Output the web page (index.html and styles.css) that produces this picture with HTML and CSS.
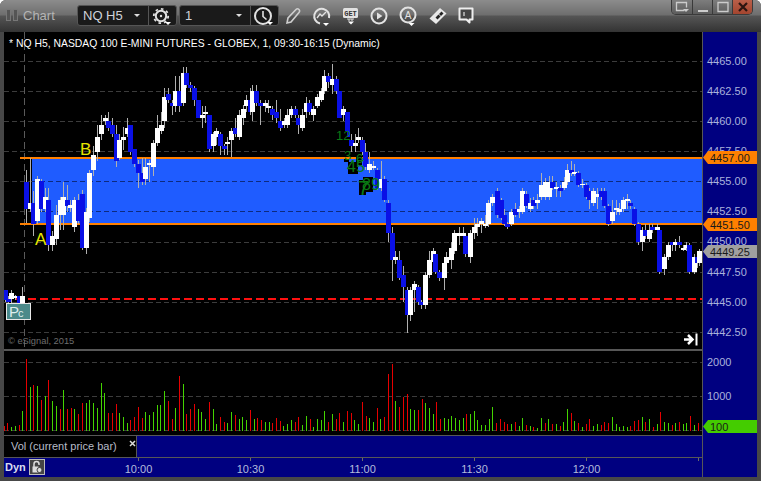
FILE: index.html
```html
<!DOCTYPE html>
<html lang="en">
<head>
<meta charset="utf-8">
<title>Chart</title>
<link rel="stylesheet" href="styles.css">
</head>
<body>
<div class="window">
  <header class="titlebar">
    <div class="grip"><span></span><span></span></div>
    <div class="app-name">Chart</div>
    <div class="combo">
      <div class="combo-field"><span>NQ H5</span><i class="caret"></i></div>
      <button class="combo-btn">
        <svg width="26" height="20" viewBox="0 0 26 20"><circle cx="12" cy="10" r="7.2" fill="none" stroke="#e2e2e2" stroke-width="1.8" stroke-dasharray="2.6 3"/><circle cx="12" cy="10" r="5.2" fill="none" stroke="#e2e2e2" stroke-width="2"/><circle cx="12" cy="10" r="1.2" fill="#e2e2e2"/><path d="M16 16h6l-3 3z" fill="#fff"/></svg>
      </button>
    </div>
    <div class="combo">
      <div class="combo-field"><span>1</span><i class="caret"></i></div>
      <button class="combo-btn">
        <svg width="26" height="20" viewBox="0 0 26 20"><circle cx="12" cy="10" r="8" fill="none" stroke="#e2e2e2" stroke-width="2"/><path d="M12 5v5.500l3.500 3" fill="none" stroke="#e2e2e2" stroke-width="1.600"/><path d="M16 16h6l-3 3z" fill="#fff"/></svg>
      </button>
    </div>
    <div class="tools">
      <svg class="tool" width="18" height="20" viewBox="0 0 18 20"><path d="M3 17l1-5L12 3.500a2 2 0 0 1 3 3L7 16z" fill="none" stroke="#cfcfcf" stroke-width="1.600"/></svg>
      <svg class="tool" width="22" height="22" viewBox="0 0 22 22"><path d="M9 18.500A7.500 7.500 0 1 1 18 13" fill="none" stroke="#e2e2e2" stroke-width="2"/><path d="M6 13l3-4 2 2 4-4" fill="none" stroke="#e2e2e2" stroke-width="1.400"/><path d="M12 18h6l-3 3z" fill="#fff"/></svg>
      <svg class="tool" width="20" height="20" viewBox="0 0 20 20"><rect x="2" y="2" width="15" height="10" rx="1.500" fill="#e2e2e2"/><text x="9.500" y="10" class="get">GET</text><path d="M6 13h7M8 13v2M11 13v2" stroke="#e2e2e2"/><path d="M7 15.500h6l-3 3z" fill="#fff"/></svg>
      <svg class="tool" width="20" height="20" viewBox="0 0 20 20"><circle cx="10" cy="10" r="7.500" fill="none" stroke="#e2e2e2" stroke-width="2"/><path d="M8 6.500l5.500 3.500-5.500 3.500z" fill="#e2e2e2"/></svg>
      <svg class="tool" width="22" height="22" viewBox="0 0 22 22"><circle cx="10" cy="10" r="7.500" fill="none" stroke="#e2e2e2" stroke-width="2"/><text x="10" y="14" class="circ-a">A</text><path d="M10.500 18h6l-3 3z" fill="#fff"/></svg>
      <svg class="tool" width="20" height="20" viewBox="0 0 20 20"><path d="M1.500 12.500L12 2l6.500 5.500L8 18z" fill="#e8e8e8"/><path d="M7.500 11.500l3-3 2 2-3 3zM11 8l2.500-2.500 2 2L13 10z" fill="#222"/></svg>
      <svg class="tool" width="18" height="20" viewBox="0 0 18 20"><path d="M2.500 2.500h13v11h-3v3l-3-3h-7z" fill="#444" stroke="#eee" stroke-width="2" stroke-linejoin="round"/><path d="M7 6v4" stroke="#fff"/></svg>
    </div>
    <div class="win-btns">
      <div class="win-btn"><svg width="14" height="12" viewBox="0 0 14 12"><path d="M9.500 9.500H1.500V1.500H11.500V6.500" fill="none" stroke="#ccc" stroke-width="1.300"/><path d="M8 8h6l-3 3z" fill="#ccc"/></svg></div>
      <div class="win-btn"><svg width="12" height="12" viewBox="0 0 12 12"><path d="M1 10h10" stroke="#ccc" stroke-width="2"/></svg></div>
      <div class="win-btn"><svg width="12" height="12" viewBox="0 0 12 12"><path d="M1 1.500h10v9H1z" fill="none" stroke="#ccc" stroke-width="1.300"/></svg></div>
      <div class="win-btn close"><svg width="12" height="12" viewBox="0 0 12 12"><path d="M2 2l8 8M10 2l-8 8" stroke="#2a1410" stroke-width="2.200"/></svg></div>
    </div>
  </header>

  <main class="workspace">
    <section class="plots">
      <svg id="price" class="price-plot" width="698" height="317" viewBox="4 32 698 317">
        <rect x="32" y="158" width="670" height="66" class="zone"/>
        <g class="grid">
          <path d="M4 61.500H702M4 91.500H702M4 121.500H702M4 151.500H702M4 242.500H702M4 272.500H702M4 302.500H702M4 332.500H702"/>
        </g>
        <path class="grid-zone" d="M32 181.500H702M32 211.500H702"/>
        <path class="grid-left" d="M4 181.500H32M4 211.500H32"/>
        <path class="session" d="M24.500 32V349"/>
        <path class="level" d="M20 158H702M20 224H702"/>
        <path class="prev-close" d="M4 299H702"/>
        <g id="candles"></g>
        <g class="counts">
          <rect x="339" y="131" width="8" height="10"/><rect x="344" y="159" width="5" height="3"/><rect x="356" y="153" width="6" height="12"/><rect x="348" y="162" width="10" height="12"/><rect x="359" y="180" width="7" height="15"/><rect x="363" y="177" width="10" height="15"/>
          <text x="336" y="140">12</text><text x="344" y="160">3</text><text x="356" y="163">6</text><text x="347" y="172" class="mid">45</text><text x="358" y="195" class="big">7</text><text x="362" y="190" class="mid">89</text>
        </g>
        <text x="80" y="155" class="mark">B</text>
        <text x="35" y="245" class="mark">A</text>
        <g>
          <rect x="6.500" y="303.500" width="24" height="16" class="pc-box"/>
          <text x="9" y="317" class="pc-text">P</text><text x="18" y="317" class="pc-text small">c</text>
        </g>
        <text x="8" y="344" class="copy">© eSignal, 2015</text>
        <path d="M684 339.500h7M688 335l4.500 4.500-4.500 4.500" fill="none" stroke="#fff" stroke-width="2.500"/>
        <path d="M696.500 333.500v12" stroke="#fff" stroke-width="2"/>
      </svg>
      <div class="pane-rule"></div>
      <svg id="volume" class="vol-plot" width="698" height="84" viewBox="4 351 698 84">
        <path class="grid" d="M4 362.500H702M4 396.500H702M4 430.500H702"/>
        <g id="vol-bars"></g>
      </svg>
      <div class="legend-row">
        <div class="legend"><span class="legend-name">Vol (current price bar)</span><svg class="legend-x" width="7" height="7" viewBox="0 0 7 7"><path d="M1 1l5 5M6 1l-5 5" stroke="#ddd" stroke-width="1.500"/></svg></div>
        <div class="legend-fill"></div>
      </div>
      <div class="time-row">
        <div class="dyn">Dyn</div>
        <div class="lock"><svg width="14" height="14" viewBox="1 1 14 14"><path d="M5 8V5a2.500 2.500 0 0 1 5 0v1" fill="none" stroke="#ddd" stroke-width="1.500"/><rect x="3.500" y="7.500" width="6" height="6" fill="#ddd"/><circle cx="10.500" cy="11" r="2.500" fill="#ddd" stroke="#444"/></svg></div>
        <svg class="time-axis" width="698" height="20" viewBox="4 457 698 20">
          <path class="tick" d="M138.500 458v3M250.500 458v3M362.500 458v3M474.500 458v3M586.500 458v3M698.500 458v3"/>
          <text x="138.500" y="473">10:00</text><text x="250.500" y="473">10:30</text><text x="362.500" y="473">11:00</text><text x="474.500" y="473">11:30</text><text x="586.500" y="473">12:00</text>
        </svg>
      </div>
    </section>
    <aside class="axis">
      <svg width="55" height="445" viewBox="702 32 55 445">
        <g class="axis-labels">
          <text x="707" y="65">4465.00</text><text x="707" y="95">4462.50</text><text x="707" y="125">4460.00</text><text x="707" y="155">4457.50</text><text x="707" y="185">4455.00</text><text x="707" y="215">4452.50</text><text x="707" y="245">4450.00</text><text x="707" y="276">4447.50</text><text x="707" y="306">4445.00</text><text x="707" y="336">4442.50</text>
          <text x="707" y="366">2000</text><text x="707" y="400">1000</text><text x="707" y="433">0</text>
        </g>
        <g class="flags">
          <path d="M703 157.500l5-6.500h49v13h-49z" fill="#ff8000"/><text x="710" y="161.500">4457.00</text>
          <path d="M703 224.500l5-6.500h49v13h-49z" fill="#ff8000"/><text x="710" y="228.500">4451.50</text>
          <path d="M703 251.500l5-6.500h49v13h-49z" fill="#a0a0a0"/><text x="710" y="255.500">4449.25</text>
          <path d="M703 426.500l5-6.500h49v13h-49z" fill="#44cc00"/><text x="710" y="430.500">100</text>
        </g>
      </svg>
    </aside>
    <div class="heading">* NQ H5, NASDAQ 100 E-MINI FUTURES - GLOBEX, 1, 09:30-16:15 (Dynamic)</div>
  </main>
</div>
<script src="chart.js"></script>
</body>
</html>
```

FILE: styles.css
```css
* { box-sizing: border-box; }
html, body { margin: 0; padding: 0; width: 761px; height: 481px; overflow: hidden; background: #fff; }
body { font-family: "Liberation Sans", Arial, sans-serif; }
svg { display: block; }

.window {
  width: 761px; height: 481px; display: flex; flex-direction: column;
  background: #474747; border-radius: 6px 6px 0 0; overflow: hidden;
}

.titlebar {
  height: 32px; flex: none; display: flex; align-items: flex-start; padding-left: 6px;
  background: linear-gradient(#8c8c8c 0, #6e6e6e 15px, #555 16px, #333 32px);
}
.grip { display: flex; gap: 2px; margin-top: 9px; }
.grip span { width: 5px; height: 12px; border: 1px solid #777; background: #555; }
.app-name { margin: 8px 0 0 5px; width: 54px; color: #b4b4b4; font-size: 13px; line-height: 16px; font-weight: 400; }

.combo {
  width: 100px; height: 21px; margin: 5px 2px 0 0; display: flex;
  background: #1a1a1a; border: 1px solid #555; border-radius: 3px; color: #cfd3da;
}
.combo-field { flex: 1; display: flex; align-items: center; justify-content: space-between; padding: 0 8px 0 5px; font-size: 13px; border-right: 1px solid #555; }
.caret { width: 0; height: 0; border: 3px solid transparent; border-top: 3px solid #ddd; border-bottom: 0; }
.combo-btn { width: 27px; flex: none; padding: 0; border: 0; background: none; }

.tools { display: flex; align-items: center; margin: 5px 0 0 0; height: 22px; }
.tool { flex: none; }
.tool:nth-child(1) { margin-left: 3px; }
.tool:nth-child(2) { margin-left: 9px; }
.tool:nth-child(3) { margin-left: 8px; }
.tool:nth-child(4) { margin-left: 8px; }
.tool:nth-child(5) { margin-left: 9px; }
.tool:nth-child(6) { margin-left: 8px; }
.tool:nth-child(7) { margin-left: 9px; }
.get { font: 700 7px "Liberation Mono", monospace; text-anchor: middle; fill: #333; }
.circ-a { font: 400 10px "Liberation Sans", sans-serif; text-anchor: middle; fill: #e2e2e2; }

.win-btns {
  margin-left: auto; margin-right: 8px; display: flex; height: 15px;
  border: 1px solid #3a3a3a; border-top: 0; border-radius: 0 0 5px 5px; overflow: hidden;
}
.win-btn { width: 20px; display: flex; align-items: center; justify-content: center; border-left: 1px solid #3a3a3a; background: linear-gradient(#7d7d7d, #5c5c5c); }
.win-btn:first-child { border-left: 0; }
.win-btn.close { background: linear-gradient(#b95f49, #a3452f); }

.workspace { position: relative; flex: 1; display: flex; padding: 0 4px 4px; min-height: 0; }
.plots { width: 698px; flex: none; display: flex; flex-direction: column; background: #000; }
.axis { width: 55px; flex: none; background: #000080; box-shadow: inset 1px 0 0 #575757; }

.heading { position: absolute; left: 9px; top: 5px; color: #fff; font-size: 10.4px; line-height: 14px; white-space: nowrap; }

.price-plot { background: #000; flex: none; }
.vol-plot { background: #000; flex: none; }
.pane-rule { height: 2px; flex: none; background: #575757; }

.zone { fill: #1f5cff; }
.grid { stroke: #3c3c3c; stroke-dasharray: 5 3; fill: none; }
.grid-zone { stroke: #0d2a80; stroke-dasharray: 5 3; fill: none; }
.grid-left { stroke: #3c3c3c; stroke-dasharray: 5 3; fill: none; }
.session { stroke: #5a5a5a; stroke-dasharray: 7 4; fill: none; }
.level { stroke: #ff8000; stroke-width: 2; fill: none; }
.prev-close { stroke: #ff1010; stroke-width: 2; stroke-dasharray: 8 4; fill: none; }
.wick { fill: #b0b0b0; }
.up { fill: #fff; }
.down { fill: #0a10e6; }
.vr { stroke: #e60000; }
.vg { stroke: #44d400; }

.counts rect { fill: #000; }
.counts text { fill: #0a7a14; font-size: 13px; }
.counts text.mid { font-size: 16px; }
.counts text.big { font-size: 20px; }
.mark { fill: #e6e600; font-size: 17px; }
.pc-box { fill: #4b8a8a; stroke: #e8e8e8; stroke-width: 1; }
.pc-text { fill: #dfeeee; font-size: 15px; }
.pc-text.small { font-size: 11px; }
.copy { fill: #6e6e6e; font-size: 9.3px; }

.legend-row { height: 22px; flex: none; display: flex; border-top: 1px solid #575757; }
.legend { width: 132px; flex: none; display: flex; background: #000; color: #b8bcc8; font-size: 11px; padding: 3px 0 0 7px; line-height: 14px; }
.legend-name { width: 115px; flex: none; white-space: nowrap; }
.legend-x { margin: 1px 0 0 3px; flex: none; }
.legend-fill { flex: 1; background: #000080; border-left: 1px solid #575757; }

.time-row { position: relative; flex: 1; display: flex; align-items: center; background: #000080; border-top: 1px solid #575757; min-height: 0; }
.dyn { position: absolute; left: 1px; top: 1px; color: #d8dcf0; font-size: 11px; font-weight: 700; line-height: 16px; z-index: 1; }
.lock { position: absolute; left: 25px; top: 1px; width: 16px; height: 16px; background: #444; border: 1px solid #bbb; z-index: 1; }
.time-axis { flex: none; margin-top: -1px; }
.time-axis text { fill: #b4bcdc; font-size: 11px; text-anchor: middle; }
.tick { stroke: #6a6a6a; fill: none; }

.axis-labels text { fill: #aab2dc; font-size: 11px; }
.flags text { fill: #1a1a1a; font-size: 11px; }
```

FILE: chart.js
```js
// [center x, body top, body bottom, wick top, wick bottom, colour]
var candles = [
[5.5,290,300,290,302,'b'],[8,299,302,296,304,'b'],[11.5,293,299,290,306,'w'],[15.5,296,298,295,300,'w'],[19.5,296,309,296,311,'b'],[22.5,296,305,287,315,'w'],
[26.5,182,209,170,223,'b'],[30,203,209,158,212,'w'],[33.5,203,224,191,236,'b'],[37.5,179,221,176,224,'w'],[41,181,209,179,212,'b'],[45,197,209,188,212,'w'],[48.5,200,245,188,251,'b'],[52,236,245,231,251,'w'],[56.5,215,239,205,245,'w'],[60,200,215,197,230,'w'],[63,197,215,182,230,'w'],[67,200,206,185,212,'b'],[70.5,205,208,200,212,'w'],[74,200,227,197,232,'w'],[78,200,221,194,224,'b'],[82,194,248,190,250,'b'],[86,212,248,208,254,'w'],[89.5,173,218,170,222,'w'],[93.5,155,170,146,176,'w'],[97.5,137,152,125,161,'w'],[101.5,125,134,115,140,'w'],[105,118,121,115,125,'w'],[108,121,128,112,131,'b'],[112.5,125,134,118,137,'b'],[116.5,134,161,125,167,'b'],[119,140,158,134,160,'w'],[123.5,137,140,127,150,'w'],[127,128,134,118,137,'w'],[130.5,125,152,125,155,'b'],[134.5,149,164,149,167,'b'],[138.5,164,173,160,188,'b'],[142,173,182,158,185,'b'],[145,167,179,158,185,'w'],[149,163,165,160,182,'w'],[153,143,167,140,176,'w'],[157.5,128,143,115,146,'w'],[161,125,131,112,134,'w'],[164.5,97,121,88,128,'w'],[168.5,94,100,88,103,'b'],[172,103,106,100,115,'b'],[175,91,106,76,112,'w'],[179,91,106,76,112,'b'],[183,73,103,67,106,'w'],[186.5,73,85,67,88,'b'],[190.5,85,88,82,92,'b'],[194.5,88,100,86,106,'b'],[198.5,100,118,100,118,'b'],[202,115,118,106,128,'w'],[205.5,112,114,106,123,'w'],[209.5,115,149,115,152,'b'],[213,134,146,132,152,'w'],[216.5,131,137,128,145,'w'],[220,134,146,132,155,'b'],[224,146,149,144,155,'b'],[227.5,142,144,137,155,'w'],[231.5,131,140,128,157,'w'],[235,128,134,118,137,'b'],[239,115,137,110,140,'w'],[243,109,118,105,125,'w'],[246,100,106,95,112,'w'],[250,100,112,88,115,'b'],
[252,91,112,85,121,'w'],[256,91,103,85,106,'b'],[260,103,106,100,125,'b'],[265,103,106,100,112,'w'],[268,106,108,100,113,'w'],[272,109,115,106,120,'b'],[276,112,118,100,123,'b'],[280,121,128,109,131,'b'],[284,121,125,118,128,'w'],[287,115,125,109,128,'w'],[291,109,115,106,118,'w'],[295,109,115,106,118,'b'],[298,118,125,115,134,'b'],[302,115,128,109,131,'w'],[306,103,112,97,118,'w'],[309.5,103,112,100,115,'b'],[313,109,115,106,121,'w'],[317,97,106,94,108,'w'],[321,91,100,88,102,'w'],[324.5,76,91,70,94,'w'],[328,76,82,73,88,'b'],[332,79,85,64,94,'w'],[336.5,79,91,76,94,'b'],[339.5,91,118,91,118,'b'],[343.5,109,115,106,121,'w'],[347,112,137,112,137,'b'],[351.5,140,146,134,152,'b'],[355,143,146,134,152,'w'],[358,137,140,128,143,'w'],[362,140,152,137,155,'b'],[365.5,152,167,143,170,'b'],[369,164,170,152,173,'w'],[373,166,168,161,170,'w'],[377.5,170,188,168,190,'b'],[381.5,179,188,161,191,'w'],[384,179,200,176,202,'b'],[388.5,203,233,200,242,'b'],
[392,233,260,227,281,'b'],[395.5,257,260,251,264,'w'],[399,260,278,251,280,'b'],[403,275,287,266,302,'b'],[407,290,315,287,333,'b'],[410.5,290,315,287,321,'w'],[414.5,284,290,281,312,'w'],[418.5,287,302,285,305,'b'],[421.5,302,305,300,309,'b'],[425,275,305,272,309,'w'],[429,260,275,251,278,'w'],[433,251,262,248,265,'w'],[435.5,254,272,251,274,'b'],[439.5,272,278,270,281,'b'],[444.5,263,278,257,290,'w'],[446.5,257,263,252,269,'w'],[451,248,260,242,269,'w'],[454.5,233,251,230,254,'w'],[459,233,236,227,245,'w'],[463,233,236,227,245,'w'],[465.5,236,254,234,257,'b'],[470.5,233,257,230,263,'w'],[474,227,233,218,239,'w'],[477.5,224,227,218,236,'w'],[481.5,221,224,218,233,'w'],[485.5,224,226,215,228,'w'],[488.5,203,224,200,227,'w'],[492,197,203,194,206,'w'],[497,191,215,188,218,'b'],
[501,200,218,198,220,'b'],[504,215,224,209,226,'b'],[507.5,224,227,222,229,'b'],[511.5,212,224,209,226,'w'],[515,209,215,203,217,'b'],[519,209,212,206,218,'w'],[522,191,212,188,214,'w'],[526,194,206,191,208,'b'],[530,203,209,198,212,'w'],[533,200,206,197,209,'b'],[537.5,200,203,194,209,'w'],[541.5,185,197,173,200,'w'],[545,182,197,178,200,'w'],[549,182,197,176,200,'w'],[552.5,182,188,176,190,'b'],[556,187,189,182,197,'w'],[560,188,191,185,197,'b'],[564,182,188,177,190,'w'],[567.5,170,182,164,185,'w'],[571,170,173,161,176,'b'],[574,172,174,164,176,'w'],[578.5,173,185,171,187,'b'],[582,184,185,179,188,'w'],[586,185,197,183,199,'b'],[589,191,200,188,209,'b'],[593,191,203,188,206,'w'],[597,194,197,188,209,'w'],[601,191,197,188,200,'b'],[604,191,206,188,208,'b'],[608,206,224,204,226,'b'],[612,212,221,200,224,'w'],[616,208,210,200,215,'w'],[619.5,209,212,203,215,'w'],[623,200,209,197,212,'w'],[627,199,201,194,209,'w'],[630.5,203,206,200,209,'b'],[634.5,209,224,207,226,'b'],[638.5,224,242,222,245,'b'],[642,230,242,227,251,'w'],[645.5,230,236,224,239,'b'],[649.5,230,239,224,242,'w'],[652.5,227,230,224,233,'b'],[657,227,230,224,233,'w'],[659,230,272,228,274,'b'],[664.5,257,269,254,275,'w'],[668.5,245,257,242,260,'w'],[672,242,245,242,251,'b'],[675,242,245,239,251,'w'],[679.5,242,245,236,248,'b'],[683.5,248,250,245,251,'w'],[686,245,248,242,251,'w'],[689,245,272,243,274,'b'],[694,257,272,254,274,'w'],[697,257,263,255,268,'b'],[699.5,251,263,249,266,'w']
];

// Volume bars as read from three panes: [pane left, [x*3, top*3, kind...]]
var volumeSets = [
[0,"13r243 22r234 34g246 46g243 58r240 67g198 79r42 91g126 100r120 112g123 124r165 136g153 145r105 157g168 169g183 181r192 190g135 202r192 214r189 223g192 235r207 247r174 259g174 268g165 280g174 292g189 304g114 313g144 325r204 337r204 349r177 358g204 370g216 382g234 391r225 403r216 415r186 427r219 436g201 448g210 460g201 472g180 481g180 493g138 505r168 517r222 526g189 538r93 550g117 559r207 571r192 583r177 595g192 604g201 616g222 628r171 640g192 649g237 661r216 673r231 682g234 694g201 706r210 718g222 727g216 739g225"],
[250,"0r195 13g222 22r219 34r225 46g231 58g231 67r234 79r219 91r228 100g243 112g237 124g225 136r231 145r216 157g240 169g213 181r222 190g246 202g222 214g225 223g198 235r231 247g207 259r222 268r204 280g231 292r198 304r204 313g225 325g237 337r171 349r213 358g219 370g231 382r189 391g222 403r216 415r87 427r57 436g168 448r186 460r156 472r147 481g192 493g195 505r195 517r162 526g174 538g189 550g207 559r171 571r222 583g219 595g222 604g213 616g219 628g225 640g219 649r207 661g207 673g198 682g225 694g240 706g240 718g222 727g186 739r234"],
[500,"0r222 13r231 22r237 34g237 46r231 58g243 67g219 79r240 91g243 100r246 112g249 124g219 136r234 145g222 157r237 169g237 181r243 190g231 202g192 214r204 223g228 235r234 247g246 259r237 268r222 280g243 292g237 304r240 313r231 325r234 337g216 349g237 358g246 370g243 382g246 391r243 403r228 415r225 427g216 436r231 448g222 460r246 472g237 481r201 493g231 505g234 517r240 526g234 538r231 550g237 559g234 571r213 583g240 595r234"]
];

var NS = 'http://www.w3.org/2000/svg';
function el(name, attrs, parent) {
  var node = document.createElementNS(NS, name);
  for (var key in attrs) node.setAttribute(key, attrs[key]);
  parent.appendChild(node);
  return node;
}

var candleGroup = document.getElementById('candles');
candles.forEach(function (c) {
  el('rect', { x: Math.floor(c[0]), y: c[3], width: 1, height: c[4] - c[3], 'class': 'wick' }, candleGroup);
});
candles.forEach(function (c) {
  var left = Math.round(c[0] - 2.5);
  el('rect', { x: left, y: c[1], width: 5, height: c[2] - c[1], 'class': c[5] === 'w' ? 'up' : 'down' }, candleGroup);
});

var volGroup = document.getElementById('vol-bars');
volumeSets.forEach(function (set) {
  set[1].split(' ').forEach(function (item) {
    var m = item.match(/(\d+)([rg])(\d+)/);
    var x = Math.floor(set[0] + (+m[1]) / 3) + 0.5;
    var top = 345 + (+m[3]) / 3;
    el('line', { x1: x, x2: x, y1: Math.round(top), y2: 431, 'class': m[2] === 'r' ? 'vr' : 'vg' }, volGroup);
  });
});
```
